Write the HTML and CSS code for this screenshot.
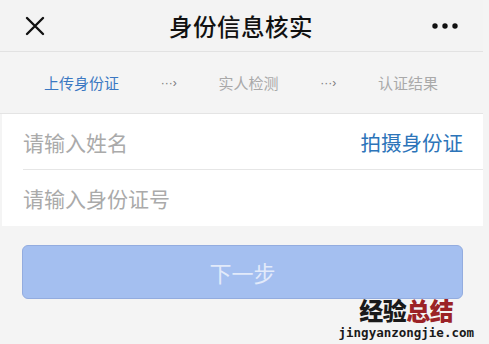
FILE: index.html
```html
<html>
<head>
    <title>身份信息核实</title>
    <meta name="viewport" content="width=device-width, initial-scale=1">
    <link rel="stylesheet" href="styles.css">
</head>
<body>

    <div class="topBar">
        <svg class="closeIcon" width="20" height="20" viewBox="0 0 20 20">
            <path d="M2 2 L18 18 M18 2 L2 18" stroke="#111" stroke-width="2.4" stroke-linecap="round" fill="none"/>
        </svg>
        <h1>身份信息核实</h1>
        <svg class="moreIcon" width="28" height="8" viewBox="0 0 28 8">
            <circle cx="4" cy="4" r="2.7" fill="#111"/>
            <circle cx="14" cy="4" r="2.7" fill="#111"/>
            <circle cx="24" cy="4" r="2.7" fill="#111"/>
        </svg>
    </div>

    <div class="steps">
        <span class="step active">上传身份证</span>
        <span class="stepArrow">···&rsaquo;</span>
        <span class="step">实人检测</span>
        <span class="stepArrow">···&rsaquo;</span>
        <span class="step">认证结果</span>
    </div>

    <div class="formCard">
        <div class="formRow">
            <span class="placeholder">请输入姓名</span>
            <span class="linkText">拍摄身份证</span>
        </div>
        <div class="formRow">
            <span class="placeholder">请输入身份证号</span>
        </div>
    </div>

    <div class="buttonArea">
        <button class="nextButton">下一步</button>
        <div class="watermark">
            <div class="wmTitle">经验<span class="wmRed">总结</span></div>
            <div class="wmUrl">jingyanzongjie.com</div>
        </div>
    </div>

</body>
</html>
```

FILE: styles.css
```css
body {
    margin: 0px;
    width: 489px;
    height: 344px;
    overflow: hidden;
    background-color: #f4f4f4;
    font-family: "Noto Sans CJK SC", "Liberation Sans", sans-serif;
}

.topBar {
    height: 51px;
    margin-right: 6px;
    display: flex;
    align-items: center;
    justify-content: space-between;
    padding: 0px 24px 0px 25px;
    background-color: #f3f3f3;
    border-bottom: 1px solid #e2e2e2;
}

.topBar h1 {
    margin: 0px 0px 0px 6px;
    font-size: 23.5px;
    font-weight: 500;
    color: #111;
    letter-spacing: 0.5px;
}

.closeIcon {
    display: block;
}

.moreIcon {
    display: block;
}

.steps {
    height: 61px;
    margin-right: 6px;
    display: flex;
    align-items: center;
    padding: 0px 45px 0px 44px;
    justify-content: space-between;
    border-bottom: 1px solid #e4e4e4;
    font-size: 15px;
}

.step {
    color: #a9a9a9;
}

.step.active {
    color: #3b78c2;
}

.stepArrow {
    color: #7a7a7a;
    font-size: 12px;
    font-family: "Liberation Sans", sans-serif;
}

.formCard {
    margin: 0px 6px 0px 2px;
    padding-left: 21px;
    background-color: #ffffff;
}

.formRow {
    height: 55px;
    display: flex;
    align-items: center;
    justify-content: space-between;
    padding-right: 20px;
    font-size: 21px;
}

.formRow + .formRow {
    height: 56px;
    border-top: 1px solid #e6e6e6;
}

.placeholder {
    color: #aaaaaa;
}

.linkText {
    color: #2c74b9;
    font-size: 20.5px;
}

.buttonArea {
    position: relative;
    padding: 19px 26px 0px 22px;
}

.nextButton {
    display: block;
    width: 100%;
    height: 54px;
    border: 1px solid #93acdf;
    border-radius: 6px;
    background-color: #a4bff0;
    color: #e2eafa;
    font-family: "Noto Sans CJK SC", sans-serif;
    font-size: 22px;
    padding: 0px;
}

.watermark {
    position: absolute;
    right: 15px;
    top: 72px;
    text-align: center;
}

.wmTitle {
    font-size: 24px;
    font-weight: 900;
    line-height: 24px;
    color: #1a1a1a;
    letter-spacing: -0.5px;
}

.wmRed {
    color: #9b2226;
}

.wmUrl {
    margin-top: 4px;
    font-family: "DejaVu Sans Mono", monospace;
    font-weight: bold;
    font-size: 12.5px;
    line-height: 14px;
    color: #1a1a1a;
}
```
